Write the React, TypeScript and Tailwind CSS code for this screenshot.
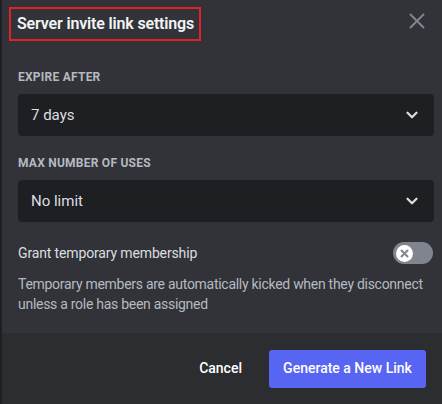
import { ChevronDown } from 'lucide-react';

function Label({ children }: { children: React.ReactNode }) {
  return (
    <div className="text-[12px] font-bold uppercase leading-4 tracking-[0.02em] text-[#b5bac1]">{children}</div>
  );
}

function Select({ value }: { value: string }) {
  return (
    <div className="flex h-[42px] items-center justify-between rounded-[4px] bg-[#1e1f22] pl-[13px] pr-[13px]">
      <span className="text-[15px] text-[#dbdee1]">{value}</span>
      <ChevronDown className="h-[18px] w-[18px] text-[#dbdee1]" strokeWidth={3} />
    </div>
  );
}

export default function App() {
  return (
    <div className="flex h-[404px] w-[442px] bg-[#1e1f22] font-['Roboto',sans-serif]">
      <div className="ml-[2px] flex flex-1 flex-col bg-[#313338]">
        <header className="flex items-start justify-between pr-[16px] pt-[7px]">
          <div className="ml-[7px] flex h-[34px] items-center border-2 border-[#e0202a] pl-[6px] pr-[5px]">
            <h1 className="whitespace-nowrap text-[16px] font-semibold tracking-[-0.01em] text-[#f2f3f5]">
              Server invite link settings
            </h1>
          </div>
          <button className="mt-[5px] text-[#80848e]">
            <svg width="18" height="18" viewBox="0 0 18 18" fill="none">
              <path d="M2 2L16 16M16 2L2 16" stroke="currentColor" strokeWidth="2" />
            </svg>
          </button>
        </header>

        <div className="flex flex-col pl-[16px] pr-[8px] pt-[28px]">
          <Label>Expire After</Label>
          <div className="mt-[9px]">
            <Select value="7 days" />
          </div>
          <div className="mt-[19px]">
            <Label>Max Number of Uses</Label>
          </div>
          <div className="mt-[9px]">
            <Select value="No limit" />
          </div>

          <div className="mt-[20px] flex items-center justify-between">
            <span className="text-[14px] tracking-[-0.01em] text-[#dbdee1]">Grant temporary membership</span>
            <div className="mr-[1px] flex h-[22px] w-[40px] items-center rounded-full bg-[#80848e] pl-[3px]">
              <div className="flex h-[17px] w-[17px] items-center justify-center rounded-full bg-white">
                <svg width="9" height="9" viewBox="0 0 9 9" fill="none">
                  <path d="M1.5 1.5L7.5 7.5M7.5 1.5L1.5 7.5" stroke="#80848e" strokeWidth="2" strokeLinecap="round" />
                </svg>
              </div>
            </div>
          </div>
          <p className="mt-[10px] text-[14px] leading-[20px] tracking-[-0.02em] text-[#b5bac1]">
            Temporary members are automatically kicked when they disconnect unless a role has been assigned
          </p>
        </div>

        <footer className="mt-auto flex h-[71px] items-center justify-end gap-[11px] bg-[#2b2d31] pr-[16px]">
          <button className="h-[38px] px-[16px] text-[14px] font-medium text-white">Cancel</button>
          <button className="h-[38px] w-[157px] rounded-[3px] bg-[#5865f2] text-[14px] font-medium text-white">
            Generate a New Link
          </button>
        </footer>
      </div>
    </div>
  );
}
